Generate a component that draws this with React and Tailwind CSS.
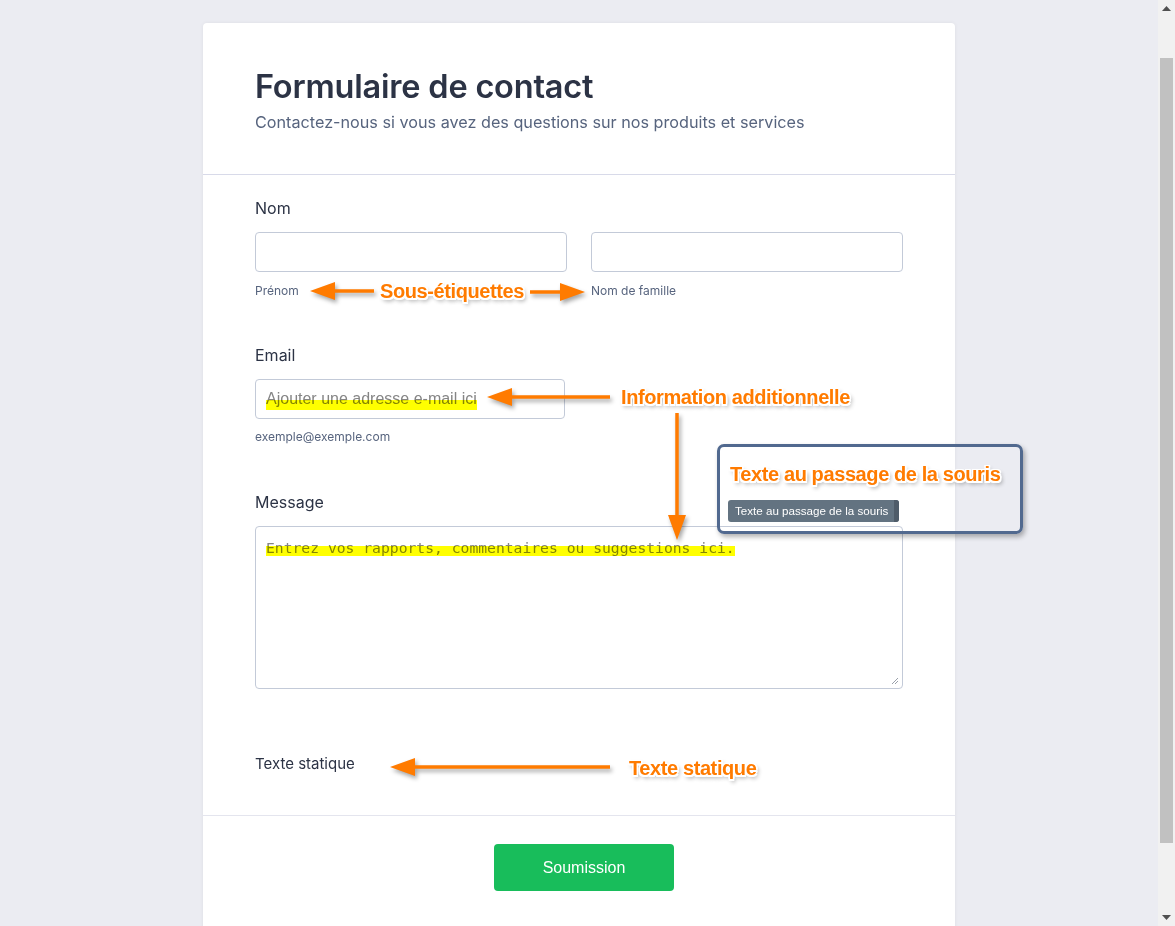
import React from "react";

const ann =
  "absolute whitespace-nowrap font-bold text-[#ff7b00] text-[20px] tracking-[-0.4px] leading-none [font-family:'Liberation_Sans_Narrow','Arial_Narrow','Liberation_Sans',sans-serif] [text-shadow:1.5px_0_0_#fff,-1.5px_0_0_#fff,0_1.5px_0_#fff,0_-1.5px_0_#fff,1.5px_1.5px_0_#fff,-1.5px_-1.5px_0_#fff,1.5px_-1.5px_0_#fff,-1.5px_1.5px_0_#fff,2px_3px_4px_rgba(0,0,0,0.45)]";

function Arrow({ x1, y1, x2, y2 }) {
  const dx = x2 - x1;
  const dy = y2 - y1;
  const len = Math.sqrt(dx * dx + dy * dy);
  const ux = dx / len;
  const uy = dy / len;
  const hl = 25;
  const hw = 9;
  const bx = x2 - ux * hl;
  const by = y2 - uy * hl;
  const px = -uy;
  const py = ux;
  const pts = `${x2},${y2} ${bx + px * hw},${by + py * hw} ${bx - px * hw},${by - py * hw}`;
  return (
    <g>
      <line x1={x1} y1={y1} x2={bx + ux * 2} y2={by + uy * 2} stroke="#ff7b00" strokeWidth="3.5" />
      <polygon points={pts} fill="#ff7b00" />
    </g>
  );
}

function Field({ label, children }) {
  return (
    <div>
      <div className="text-[16px] leading-[24px] text-[#2c3345]">{label}</div>
      <div className="mt-3">{children}</div>
    </div>
  );
}

export default function App() {
  return (
    <div className="relative flex h-[926px] w-[1175px] overflow-hidden bg-[#ebecf2] [font-family:Inter,'Liberation_Sans',sans-serif]">
      <div className="flex flex-1 justify-center pt-[23px]">
        <div className="w-[752px] self-start rounded-t-[4px] bg-white shadow-[0_0_4px_rgba(0,0,0,0.06)]">
          <div className="border-b border-[#d8dae9] px-[52px] pt-[44px] pb-[40px]">
            <h1 className="text-[32.5px] leading-[40px] font-semibold tracking-[-0.2px] text-[#2c3345]">
              Formulaire de contact
            </h1>
            <p className="mt-[3px] text-[16.2px] leading-[24px] text-[#57647e]">
              Contactez-nous si vous avez des questions sur nos produits et services
            </p>
          </div>

          <div className="px-[52px] pt-[21px] pb-[39px]">
            <Field label="Nom">
              <div className="flex gap-6">
                <div className="w-[312px]">
                  <div className="h-10 rounded-[4px] border border-[#c3cad8]" />
                  <div className="mt-[11px] text-[12px] leading-[16px] text-[#57647e]">Prénom</div>
                </div>
                <div className="w-[312px]">
                  <div className="h-10 rounded-[4px] border border-[#c3cad8]" />
                  <div className="mt-[11px] text-[12px] leading-[16px] text-[#57647e]">Nom de famille</div>
                </div>
              </div>
            </Field>

            <div className="mt-[44px]">
              <Field label="Email">
                <div className="flex h-10 w-[310px] items-center rounded-[4px] border border-[#c3cad8] px-[10px]">
                  <span className="relative text-[16px] leading-[20px] text-[#858585] [font-family:'Liberation_Sans',Arial,sans-serif] after:absolute after:inset-x-0 after:bottom-[-1px] after:h-[10px] after:bg-[#ffff00] after:mix-blend-multiply after:content-['']">
                    Ajouter une adresse e-mail ici
                  </span>
                </div>
                <div className="mt-[10px] text-[12px] leading-[16px] text-[#57647e]">exemple@exemple.com</div>
              </Field>
            </div>

            <div className="mt-[45px]">
              <Field label="Message">
                <div className="relative h-[163px] rounded-[4px] border border-[#c3cad8] px-[10px] pt-[8px]">
                  <span className="relative text-[14.7px] leading-[20px] text-[#858585] [font-family:'DejaVu_Sans_Mono','Liberation_Mono',monospace] after:absolute after:inset-x-0 after:bottom-[0px] after:h-[10px] after:bg-[#ffff00] after:mix-blend-multiply after:content-['']">
                    Entrez vos rapports, commentaires ou suggestions ici.
                  </span>
                  <svg className="absolute right-[3px] bottom-[3px]" width="8" height="8" viewBox="0 0 8 8">
                    <line x1="1" y1="7" x2="7" y2="1" stroke="#9aa0aa" strokeWidth="1" />
                    <line x1="4" y1="7" x2="7" y2="4" stroke="#9aa0aa" strokeWidth="1" />
                  </svg>
                </div>
              </Field>
            </div>

            <div className="mt-[63px] text-[15px] leading-[24px] text-[#2c3345]">Texte statique</div>
          </div>

          <div className="flex justify-center border-t border-[#e4e5ee] pt-[28px] pb-[40px]">
            <button className="ml-[10px] h-[47px] w-[180px] rounded-[4px] bg-[#18bd5b] text-[16px] text-white [font-family:'Liberation_Sans',Arial,sans-serif]">
              Soumission
            </button>
          </div>
        </div>
      </div>

      {/* scrollbar */}
      <div className="flex w-[17px] flex-col items-center bg-[#f1f1f1]">
        <div className="flex h-[17px] items-center justify-center">
          <svg width="9" height="5" viewBox="0 0 9 5"><polygon points="4.5,0 9,5 0,5" fill="#505050" /></svg>
        </div>
        <div className="mt-[41px] h-[785px] w-[13px] bg-[#c1c1c1]" />
        <div className="mt-auto flex h-[17px] items-center justify-center">
          <svg width="9" height="5" viewBox="0 0 9 5"><polygon points="0,0 9,0 4.5,5" fill="#505050" /></svg>
        </div>
      </div>

      {/* annotations overlay */}
      <svg className="pointer-events-none absolute inset-0" width="1175" height="926" style={{ filter: "drop-shadow(2px 3px 2px rgba(0,0,0,0.35))" }}>
        <Arrow x1={374} y1={291} x2={310} y2={291} />
        <Arrow x1={530} y1={292} x2={585} y2={292} />
        <Arrow x1={610} y1={397} x2={487} y2={397} />
        <Arrow x1={677} y1={413} x2={677} y2={540} />
        <Arrow x1={610} y1={767} x2={390} y2={767} />
      </svg>

      <div className={ann + " left-[380px] top-[281px]"}>Sous-étiquettes</div>
      <div className={ann + " left-[621px] top-[387px]"}>Information additionnelle</div>
      <div className={ann + " left-[629px] top-[758px]"}>Texte statique</div>

      <div className="absolute left-[717px] top-[444px] h-[90px] w-[306px] rounded-[7px] border-[3.5px] border-[#51698f] shadow-[2px_3px_5px_rgba(0,0,0,0.3)]">
        <div className={ann + " left-[10px] top-[17px]"}>Texte au passage de la souris</div>
        <div className="absolute left-[8px] top-[53px] flex h-[22px] w-[171px] overflow-hidden rounded-[3px] bg-[#637381]">
          <div className="flex flex-1 items-center pl-[7px] text-[11.6px] text-white [font-family:'Liberation_Sans',Arial,sans-serif]">
            Texte au passage de la souris
          </div>
          <div className="w-[5px] bg-[#4f5c69]" />
        </div>
      </div>
    </div>
  );
}
